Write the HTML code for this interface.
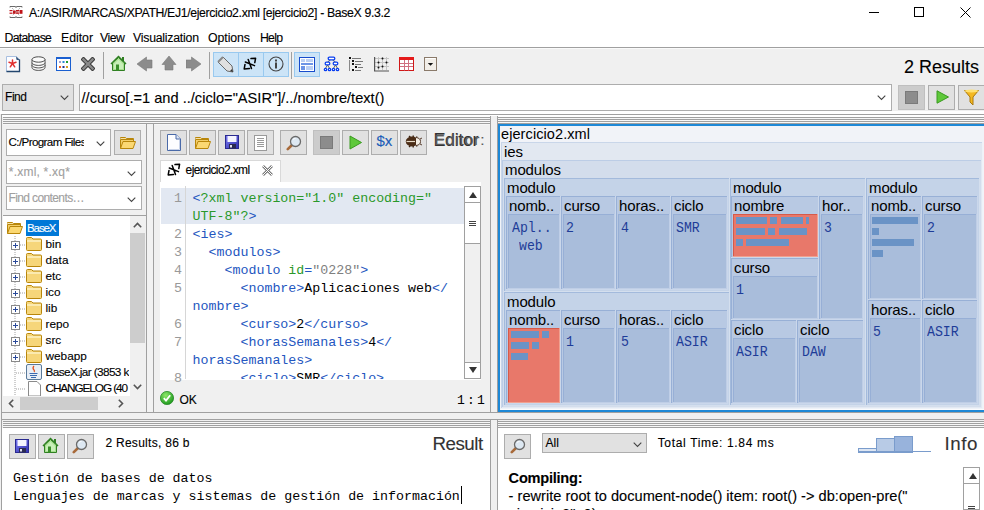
<!DOCTYPE html><html><head><meta charset="utf-8"><style>html,body{margin:0;padding:0;}body{width:984px;height:510px;overflow:hidden;position:relative;background:#f0f0f0;}.a{position:absolute;box-sizing:border-box;}.t{position:absolute;white-space:pre;}.s{-webkit-text-stroke:0.12px currentColor;}</style></head><body><div class="a" style="left:0px;top:0px;width:984px;height:48px;background:#ffffff;"></div>
<div class="a" style="left:0px;top:47px;width:984px;height:1px;background:#a0a0a0;"></div>
<svg class="a" style="left:9px;top:6px" width="14" height="12" viewBox="0 0 14 12"><path d="M1 1.5V0.5H6.5V1.5M7.5 1.5V0.5H13V1.5M1 10.5V11.5H6.5V10.5M7.5 10.5V11.5H13V10.5" fill="none" stroke="#6a6a6a"/><path d="M3 2L11 10M11 2L3 10" stroke="#9a9a9a" stroke-dasharray="1 1.2"/><g fill="#c0141a"><rect x="0.5" y="4" width="3" height="1.2"/><rect x="0.5" y="6.6" width="3" height="1.2"/><rect x="4" y="4.5" width="2.6" height="3.3"/><rect x="7" y="4" width="3" height="1.2"/><rect x="7.5" y="5.5" width="2" height="1"/><rect x="7" y="6.6" width="3" height="1.2"/><rect x="10.5" y="4" width="3" height="3.8"/></g></svg>
<div class="t s" style="left:29px;top:7px;font-size:12.3px;line-height:12.3px;font-family:'Liberation Sans', sans-serif;color:#000;letter-spacing:-0.364px;">A:/ASIR/MARCAS/XPATH/EJ1/ejercicio2.xml [ejercicio2] - BaseX 9.3.2</div>
<div class="a" style="left:869px;top:12px;width:10px;height:1px;background:#000;"></div>
<div class="a" style="left:914px;top:7px;width:10px;height:10px;box-shadow:inset 0 0 0 1px #000;"></div>
<svg class="a" style="left:960px;top:7px" width="11" height="11" viewBox="0 0 11 11"><path d="M0.5 0.5L10.5 10.5M10.5 0.5L0.5 10.5" stroke="#000" stroke-width="1"/></svg>
<div class="t s" style="left:4.5px;top:32px;font-size:12.3px;line-height:12.3px;font-family:'Liberation Sans', sans-serif;color:#000;letter-spacing:-0.750px;">Database</div>
<div class="t s" style="left:61px;top:32px;font-size:12.3px;line-height:12.3px;font-family:'Liberation Sans', sans-serif;color:#000;letter-spacing:-0.026px;">Editor</div>
<div class="t s" style="left:100px;top:32px;font-size:12.3px;line-height:12.3px;font-family:'Liberation Sans', sans-serif;color:#000;letter-spacing:-0.479px;">View</div>
<div class="t s" style="left:133px;top:32px;font-size:12.3px;line-height:12.3px;font-family:'Liberation Sans', sans-serif;color:#000;letter-spacing:-0.236px;">Visualization</div>
<div class="t s" style="left:208px;top:32px;font-size:12.3px;line-height:12.3px;font-family:'Liberation Sans', sans-serif;color:#000;letter-spacing:-0.064px;">Options</div>
<div class="t s" style="left:260px;top:32px;font-size:12.3px;line-height:12.3px;font-family:'Liberation Sans', sans-serif;color:#000;letter-spacing:-0.765px;">Help</div>
<div class="a" style="left:0px;top:48px;width:984px;height:1px;background:#fafafa;"></div>
<svg class="a" style="left:6px;top:56px" width="15" height="17" viewBox="0 0 15 17"><path d="M0.5 0.5H10.5L13.5 3.5V15.5H0.5Z" fill="#fdfdff" stroke="#a8bfe0"/><path d="M13.5 3.5V15.5H0.5" fill="none" stroke="#23466e" stroke-width="1.3"/><path d="M10 0.5L13.8 4.2L10.5 3.8Z" fill="#23466e"/><path d="M6.5 7.5V4M6.5 7.5L3 6.2M6.5 7.5L10 6.2M6.5 7.5L4.3 10.8M6.5 7.5L8.7 10.8" stroke="#e03030" stroke-width="1.5" stroke-linecap="round"/></svg>
<svg class="a" style="left:31px;top:56px" width="15" height="16" viewBox="0 0 15 16"><g fill="#fafafa" stroke="#3c3c3c" stroke-width="0.9"><path d="M1 11.5c0 1.6 2.9 2.9 6.5 2.9s6.5-1.3 6.5-2.9V9H1Z"/><path d="M1 9c0 1.6 2.9 2.9 6.5 2.9S14 10.6 14 9V6.5H1Z"/><path d="M1 6.5c0 1.6 2.9 2.9 6.5 2.9S14 8.1 14 6.5V3.5H1Z"/><ellipse cx="7.5" cy="3.5" rx="6.5" ry="2.7"/></g></svg>
<svg class="a" style="left:56px;top:57px" width="15" height="14" viewBox="0 0 15 14"><rect x="0.5" y="0.5" width="14" height="13" fill="#fff" stroke="#1a5fd0"/><rect x="0" y="0" width="15" height="2" fill="#1a5fd0"/><rect x="3" y="4" width="2" height="2" fill="#a0a0d0"/><rect x="6.5" y="4" width="2" height="2" fill="#2a8ad8"/><rect x="10" y="4" width="2" height="2" fill="#20a030"/><rect x="3" y="9" width="2" height="2" fill="#f06020"/><rect x="6.5" y="9" width="2" height="2" fill="#1a3090"/><rect x="10" y="9" width="2" height="2" fill="#d8a020"/></svg>
<svg class="a" style="left:81px;top:57px" width="14" height="14" viewBox="0 0 14 14"><path d="M2.5 2.5L11.5 11.5M11.5 2.5L2.5 11.5" stroke="#3a3a3a" stroke-width="4.4" stroke-linecap="square"/><path d="M2.5 2.5L11.5 11.5M11.5 2.5L2.5 11.5" stroke="#8a8a8a" stroke-width="2.4" stroke-linecap="square"/></svg>
<div class="a" style="left:103px;top:52px;width:1px;height:27px;background:#a0a0a0;"></div>
<svg class="a" style="left:110px;top:55px" width="17" height="17" viewBox="0 0 17 17"><path d="M1 9L8.5 1.5L16 9" fill="none" stroke="#2f7f22" stroke-width="1.5"/><path d="M2.5 8V15.5H14.5V8L8.5 2.5Z" fill="#a6de8e" stroke="#2f7f22"/><path d="M4 9L8.5 4.5L13 9V14H4Z" fill="#c8efb8"/><rect x="6" y="9.5" width="3" height="6" fill="#3a8f2a"/><rect x="12" y="2" width="2" height="4" fill="#2f7f22"/></svg>
<svg class="a" style="left:137px;top:56px" width="16" height="16" viewBox="0 0 16 16"><path d="M0 8L9.5 1V4H15V12H9.5V15Z" fill="#8c8c8c" stroke="#7a7a7a" stroke-width="0.6"/></svg>
<svg class="a" style="left:161px;top:55px" width="16" height="16" viewBox="0 0 16 16"><path d="M8 1L15 9.5H12V15H4V9.5H1Z" fill="#8c8c8c" stroke="#7a7a7a" stroke-width="0.6"/></svg>
<svg class="a" style="left:186px;top:56px" width="16" height="16" viewBox="0 0 16 16"><path d="M15 8L5.5 1V4H0V12H5.5V15Z" fill="#8c8c8c" stroke="#7a7a7a" stroke-width="0.6"/></svg>
<div class="a" style="left:209px;top:52px;width:1px;height:27px;background:#a0a0a0;"></div>
<div class="a" style="left:213px;top:52px;width:26px;height:25px;background:#cce4f7;box-shadow:inset 0 0 0 1px #99c9ef;"></div>
<div class="a" style="left:238px;top:52px;width:26px;height:25px;background:#cce4f7;box-shadow:inset 0 0 0 1px #99c9ef;"></div>
<div class="a" style="left:263px;top:52px;width:26px;height:25px;background:#cce4f7;box-shadow:inset 0 0 0 1px #99c9ef;"></div>
<svg class="a" style="left:217px;top:56px" width="17" height="17" viewBox="0 0 17 17"><path d="M3 4L6 1L15 10L16 16L10 15L1 6Z" fill="#e0e0e0" stroke="#6a6a6a"/><path d="M6 1L1 6" stroke="#888" stroke-width="2"/><path d="M16 16L13 15L15 13Z" fill="#333"/></svg>
<svg class="a" style="left:240px;top:55px" width="20" height="18" viewBox="0 0 20 18"><g fill="none" stroke="#000" stroke-width="1.5" stroke-linecap="round" stroke-linejoin="round"><path d="M11 3.6L15.6 3.2L14.8 7.6M5 9.4L4.2 14L9.5 13.4M5.3 7L14.5 10.6M8.2 4.5L11.5 13.5"/></g></svg>
<svg class="a" style="left:268px;top:56px" width="16" height="16" viewBox="0 0 16 16"><circle cx="8" cy="8" r="7" fill="none" stroke="#444" stroke-width="1.1"/><rect x="7" y="6.5" width="2" height="6" fill="#444"/><rect x="7" y="3.5" width="2" height="2" fill="#444"/></svg>
<div class="a" style="left:291px;top:52px;width:1px;height:27px;background:#a0a0a0;"></div>
<div class="a" style="left:294px;top:52px;width:26px;height:25px;background:#cce4f7;box-shadow:inset 0 0 0 1px #99c9ef;"></div>
<svg class="a" style="left:299px;top:57px" width="16" height="15" viewBox="0 0 16 15"><rect x="0.5" y="0.5" width="15" height="14" fill="#fff" stroke="#1040c0"/><rect x="0" y="0" width="16" height="15" fill="none" stroke="#1a4fd0" stroke-width="1.5"/><rect x="2" y="2" width="4" height="3" fill="#bcd0f4"/><rect x="7" y="2" width="7" height="3" fill="#bcd0f4"/><rect x="2" y="6" width="12" height="2" fill="#6e95e6"/><rect x="2" y="9" width="4" height="4" fill="#6e95e6"/><rect x="7" y="9" width="7" height="4" fill="#bcd0f4"/></svg>
<svg class="a" style="left:323px;top:56px" width="17" height="16" viewBox="0 0 17 16"><path d="M7.5 4L4.5 6M9.5 4L12.5 6M4.5 9L2.5 12.3M4.5 9L6.5 12.3M12.5 9L10.5 12.3M12.5 9L14.5 12.3" stroke="#6a6a50" stroke-width="1"/><g fill="#fff" stroke="#0a3ff0" stroke-width="1.3"><rect x="5.2" y="1.2" width="6.6" height="2.6" rx="1.2"/><rect x="2.2" y="6.2" width="4.6" height="2.6" rx="1.2"/><rect x="10.2" y="6.2" width="4.6" height="2.6" rx="1.2"/><circle cx="2.5" cy="13.5" r="1.2"/><circle cx="6.5" cy="13.5" r="1.2"/><circle cx="10.5" cy="13.5" r="1.2"/><circle cx="14.5" cy="13.5" r="1.2"/></g></svg>
<svg class="a" style="left:348px;top:56px" width="16" height="16" viewBox="0 0 16 16"><g fill="#111"><rect x="1" y="1" width="2" height="2"/><rect x="4" y="4" width="2" height="2"/><rect x="4" y="7" width="2" height="2"/><rect x="7" y="10" width="2" height="2"/><rect x="4" y="13" width="2" height="2"/></g><path d="M4 2.5H13M7 5.5H15M7 8.5H13M10 11.5H15M7 14.5H13" stroke="#777"/><path d="M1.5 4V15" stroke="#888"/></svg>
<svg class="a" style="left:374px;top:56px" width="16" height="16" viewBox="0 0 16 16"><path d="M4.5 1V14M8.5 1V14M12.5 1V14M1 2.5H15M1 6.5H15M1 10.5H15" stroke="#c4c4c4"/><path d="M0.6 1V15H15" fill="none" stroke="#555" stroke-width="1.2"/><g fill="#111"><circle cx="8.5" cy="2.5" r="1"/><circle cx="4.5" cy="6.5" r="1"/><circle cx="12.5" cy="6.5" r="1"/><circle cx="8.5" cy="10.5" r="1"/><circle cx="4.5" cy="11.5" r="1"/></g></svg>
<svg class="a" style="left:399px;top:57px" width="15" height="14" viewBox="0 0 15 14"><rect x="0.5" y="0.5" width="14" height="13" fill="#fff" stroke="#d01818"/><rect x="0" y="0" width="15" height="3" fill="#e41a1a"/><path d="M5.5 3V13.5M9.5 3V13.5M1 6.5H14M1 9.5H14" stroke="#cf7080"/></svg>
<svg class="a" style="left:424px;top:57px" width="13" height="14" viewBox="0 0 13 14"><rect x="0.5" y="0.5" width="12" height="13" fill="#f2eee8" stroke="#8a7a6a"/><path d="M1.5 1.5H11.5" stroke="#fff"/><path d="M3.8 6H9.2L6.5 8.8Z" fill="#111"/></svg>
<div class="t s" style="left:904px;top:58px;font-size:18px;line-height:18px;font-family:'Liberation Sans', sans-serif;color:#000;letter-spacing:-0.004px;">2 Results</div>
<div class="a" style="left:2px;top:84px;width:72px;height:27px;background:#e1e1e1;box-shadow:inset 0 0 0 1px #adadad;"></div>
<div class="t s" style="left:5px;top:91px;font-size:12px;line-height:12px;font-family:'Liberation Sans', sans-serif;color:#000;letter-spacing:-0.447px;">Find</div>
<svg class="a" style="left:60px;top:95px" width="9" height="6" viewBox="0 0 9 6"><path d="M0.7 0.7L4.5 4.5L8.3 0.7" fill="none" stroke="#444" stroke-width="1.1"/></svg>
<div class="a" style="left:79px;top:84px;width:813px;height:27px;background:#ffffff;box-shadow:inset 0 0 0 1px #adadad;"></div>
<div class="t s" style="left:81.5px;top:91px;font-size:14.6px;line-height:14.6px;font-family:'Liberation Sans', sans-serif;color:#000;letter-spacing:0.011px;">//curso[.=1 and ../ciclo="ASIR"]/../nombre/text()</div>
<svg class="a" style="left:877px;top:95px" width="9" height="6" viewBox="0 0 9 6"><path d="M0.7 0.7L4.5 4.5L8.3 0.7" fill="none" stroke="#444" stroke-width="1.1"/></svg>
<div class="a" style="left:898px;top:85px;width:27px;height:25px;background:#cccccc;box-shadow:inset 0 0 0 1px #bfbfbf;"></div>
<div class="a" style="left:905px;top:91px;width:13px;height:13px;background:#8c8c8c;box-shadow:inset 0 0 0 1px #7a7a7a;"></div>
<div class="a" style="left:928px;top:85px;width:27px;height:25px;background:#e1e1e1;box-shadow:inset 0 0 0 1px #adadad;"></div>
<svg class="a" style="left:936px;top:90px" width="13" height="14" viewBox="0 0 13 14"><path d="M1 0.8L12.5 7L1 13.2Z" fill="#5ec83a" stroke="#3a9a20"/></svg>
<div class="a" style="left:958px;top:85px;width:30px;height:25px;background:#e1e1e1;box-shadow:inset 0 0 0 1px #adadad;"></div>
<svg class="a" style="left:964px;top:89px" width="15" height="17" viewBox="0 0 15 17"><path d="M0.5 1.5H14.5L9 8V16L6 13V8Z" fill="#f4b820" stroke="#a87810"/><ellipse cx="7.5" cy="2" rx="7" ry="1.5" fill="#ffe070"/></svg>
<div class="a" style="left:0px;top:111px;width:984px;height:3px;background:#ffffff;"></div>
<div class="a" style="left:1px;top:114px;width:983px;height:1px;background:#a0a0a0;"></div>
<div class="a" style="left:1px;top:115px;width:983px;height:2px;background:#ffffff;"></div>
<div class="a" style="left:1px;top:114px;width:1px;height:396px;background:#a0a0a0;"></div>
<div class="a" style="left:3px;top:117px;width:488px;height:1px;background:#a0a0a0;"></div>
<div class="a" style="left:3px;top:119px;width:488px;height:1px;background:#a0a0a0;"></div>
<div class="a" style="left:3px;top:121px;width:488px;height:1px;background:#a0a0a0;"></div>
<div class="a" style="left:3px;top:123px;width:488px;height:1px;background:#a0a0a0;"></div>
<div class="a" style="left:3px;top:118px;width:488px;height:1px;background:#f7f7f7;"></div>
<div class="a" style="left:3px;top:120px;width:488px;height:1px;background:#f7f7f7;"></div>
<div class="a" style="left:3px;top:122px;width:488px;height:1px;background:#f7f7f7;"></div>
<div class="a" style="left:3px;top:124px;width:488px;height:1px;background:#f7f7f7;"></div>
<div class="a" style="left:497px;top:117px;width:487px;height:1px;background:#a0a0a0;"></div>
<div class="a" style="left:497px;top:119px;width:487px;height:1px;background:#a0a0a0;"></div>
<div class="a" style="left:497px;top:121px;width:487px;height:1px;background:#a0a0a0;"></div>
<div class="a" style="left:497px;top:123px;width:487px;height:1px;background:#a0a0a0;"></div>
<div class="a" style="left:497px;top:118px;width:487px;height:1px;background:#f7f7f7;"></div>
<div class="a" style="left:497px;top:120px;width:487px;height:1px;background:#f7f7f7;"></div>
<div class="a" style="left:497px;top:122px;width:487px;height:1px;background:#f7f7f7;"></div>
<div class="a" style="left:497px;top:124px;width:487px;height:1px;background:#f7f7f7;"></div>
<div class="a" style="left:491px;top:116px;width:6px;height:8px;background:#f0f0f0;"></div>
<div class="a" style="left:146px;top:124px;width:1px;height:289px;background:#a0a0a0;"></div>
<div class="a" style="left:153px;top:124px;width:1px;height:289px;background:#a0a0a0;"></div>
<div class="a" style="left:147px;top:124px;width:6px;height:288px;background:#f2f2f2;"></div>
<div class="a" style="left:490px;top:116px;width:1px;height:297px;background:#a0a0a0;"></div>
<div class="a" style="left:497px;top:116px;width:1px;height:297px;background:#a0a0a0;"></div>
<div class="a" style="left:1px;top:412px;width:983px;height:1px;background:#a0a0a0;"></div>
<div class="a" style="left:1px;top:419px;width:983px;height:1px;background:#a0a0a0;"></div>
<div class="a" style="left:3px;top:421px;width:488px;height:1px;background:#a0a0a0;"></div>
<div class="a" style="left:3px;top:423px;width:488px;height:1px;background:#a0a0a0;"></div>
<div class="a" style="left:3px;top:425px;width:488px;height:1px;background:#a0a0a0;"></div>
<div class="a" style="left:3px;top:427px;width:488px;height:1px;background:#a0a0a0;"></div>
<div class="a" style="left:3px;top:422px;width:488px;height:1px;background:#f7f7f7;"></div>
<div class="a" style="left:3px;top:424px;width:488px;height:1px;background:#f7f7f7;"></div>
<div class="a" style="left:3px;top:426px;width:488px;height:1px;background:#f7f7f7;"></div>
<div class="a" style="left:3px;top:428px;width:488px;height:1px;background:#f7f7f7;"></div>
<div class="a" style="left:498px;top:421px;width:486px;height:1px;background:#a0a0a0;"></div>
<div class="a" style="left:498px;top:423px;width:486px;height:1px;background:#a0a0a0;"></div>
<div class="a" style="left:498px;top:425px;width:486px;height:1px;background:#a0a0a0;"></div>
<div class="a" style="left:498px;top:427px;width:486px;height:1px;background:#a0a0a0;"></div>
<div class="a" style="left:498px;top:422px;width:486px;height:1px;background:#f7f7f7;"></div>
<div class="a" style="left:498px;top:424px;width:486px;height:1px;background:#f7f7f7;"></div>
<div class="a" style="left:498px;top:426px;width:486px;height:1px;background:#f7f7f7;"></div>
<div class="a" style="left:498px;top:428px;width:486px;height:1px;background:#f7f7f7;"></div>
<div class="a" style="left:490px;top:420px;width:1px;height:90px;background:#a0a0a0;"></div>
<div class="a" style="left:497px;top:420px;width:1px;height:90px;background:#a0a0a0;"></div>
<div class="a" style="left:491px;top:420px;width:6px;height:90px;background:#f0f0f0;"></div>
<div class="a" style="left:2px;top:428px;width:488px;height:82px;background:#ffffff;"></div>
<div class="a" style="left:498px;top:428px;width:486px;height:82px;background:#ffffff;"></div>
<div class="a" style="left:6px;top:129px;width:105px;height:27px;background:#ffffff;box-shadow:inset 0 0 0 1px #adadad;"></div>
<div class="a" style="left:0;top:0;width:84px;height:160px;overflow:hidden">
<div class="t s" style="left:8.5px;top:136px;font-size:11.6px;line-height:11.6px;font-family:'Liberation Sans', sans-serif;color:#000;letter-spacing:-0.601px;">C:/Program Files</div>
</div>
<svg class="a" style="left:96px;top:141px" width="9" height="6" viewBox="0 0 9 6"><path d="M0.7 0.7L4.5 4.5L8.3 0.7" fill="none" stroke="#444" stroke-width="1.1"/></svg>
<div class="a" style="left:114px;top:130px;width:27px;height:25px;background:#e1e1e1;box-shadow:inset 0 0 0 1px #adadad;"></div>
<svg class="a" style="left:120px;top:136px" width="16" height="13" viewBox="0 0 16 13"><path d="M0.5 2.5V1.5H5.5L6.5 2.5H13.5V5.5" fill="#f8e0a0" stroke="#b8860b"/><path d="M0.5 12.5V3.5H13.5V5.5" fill="#f3cf6a" stroke="#b8860b"/><path d="M0.5 12.5L3 5.5H15.5L13 12.5Z" fill="#fbd872" stroke="#b8860b"/></svg>
<div class="a" style="left:6px;top:160px;width:136px;height:24px;background:#ffffff;box-shadow:inset 0 0 0 1px #adadad;"></div>
<div class="t s" style="left:8.8px;top:166px;font-size:12px;line-height:12px;font-family:'Liberation Sans', sans-serif;color:#a0a0a0;letter-spacing:0.211px;">*.xml, *.xq*</div>
<svg class="a" style="left:127px;top:171px" width="9" height="6" viewBox="0 0 9 6"><path d="M0.7 0.7L4.5 4.5L8.3 0.7" fill="none" stroke="#444" stroke-width="1.1"/></svg>
<div class="a" style="left:6px;top:186px;width:136px;height:24px;background:#ffffff;box-shadow:inset 0 0 0 1px #adadad;"></div>
<div class="t s" style="left:8.5px;top:192px;font-size:12px;line-height:12px;font-family:'Liberation Sans', sans-serif;color:#a0a0a0;letter-spacing:-0.618px;">Find contents…</div>
<svg class="a" style="left:127px;top:197px" width="9" height="6" viewBox="0 0 9 6"><path d="M0.7 0.7L4.5 4.5L8.3 0.7" fill="none" stroke="#444" stroke-width="1.1"/></svg>
<div class="a" style="left:3px;top:215px;width:143px;height:1px;background:#a0a0a0;"></div>
<div class="a" style="left:3px;top:216px;width:127px;height:180px;background:#ffffff;"></div>
<div class="a" style="left:130px;top:216px;width:16px;height:180px;background:#f0f0f0;"></div>
<div class="a" style="left:130px;top:233px;width:15px;height:110px;background:#cdcdcd;"></div>
<svg class="a" style="left:133px;top:222px" width="9" height="6" viewBox="0 0 9 6"><path d="M0.8 5.2L4.5 1.5L8.2 5.2" fill="none" stroke="#555" stroke-width="1.6"/></svg>
<svg class="a" style="left:133px;top:384px" width="9" height="6" viewBox="0 0 9 6"><path d="M0.8 0.8L4.5 4.5L8.2 0.8" fill="none" stroke="#555" stroke-width="1.6"/></svg>
<div class="a" style="left:3px;top:396px;width:143px;height:16px;background:#f0f0f0;"></div>
<div class="a" style="left:20px;top:397px;width:78px;height:13px;background:#cdcdcd;"></div>
<svg class="a" style="left:8px;top:399px" width="6" height="9" viewBox="0 0 6 9"><path d="M5.2 0.8L1.5 4.5L5.2 8.2" fill="none" stroke="#555" stroke-width="1.6"/></svg>
<svg class="a" style="left:118px;top:399px" width="6" height="9" viewBox="0 0 6 9"><path d="M0.8 0.8L4.5 4.5L0.8 8.2" fill="none" stroke="#555" stroke-width="1.6"/></svg>
<div class="a" style="left:26px;top:220px;width:33px;height:16px;background:#0078d7;"></div>
<svg class="a" style="left:7px;top:221px" width="16" height="13" viewBox="0 0 16 13"><path d="M0.5 2.5V1.5H5.5L6.5 2.5H13.5V5.5" fill="#f8e0a0" stroke="#b8860b"/><path d="M0.5 12.5V3.5H13.5V5.5" fill="#f3cf6a" stroke="#b8860b"/><path d="M0.5 12.5L3 5.5H15.5L13 12.5Z" fill="#fbd872" stroke="#b8860b"/></svg>
<div class="t s" style="left:27px;top:223px;font-size:11.5px;line-height:11.5px;font-family:'Liberation Sans', sans-serif;color:#fff;letter-spacing:-1.095px;">BaseX</div>
<svg class="a" style="left:14px;top:236px" width="2" height="160" viewBox="0 0 2 160"><path d="M1 0V160" stroke="#a0a0a0" stroke-dasharray="1 1"/></svg>
<div class="a" style="left:11px;top:241px;width:9px;height:9px;background:#ffffff;box-shadow:inset 0 0 0 1px #8a8a8a;"></div>
<div class="a" style="left:13px;top:245px;width:5px;height:1px;background:#2a4a9a;"></div>
<div class="a" style="left:15px;top:243px;width:1px;height:5px;background:#2a4a9a;"></div>
<svg class="a" style="left:20px;top:244px" width="6" height="2" viewBox="0 0 6 2"><path d="M0 1H6" stroke="#a0a0a0" stroke-dasharray="1 1"/></svg>
<svg class="a" style="left:26px;top:237px" width="16" height="14" viewBox="0 0 16 14"><path d="M0.5 2.5V1.5Q0.5 0.5 1.5 0.5H5.5L7 2H14.5Q15.5 2 15.5 3V12.5Q15.5 13.5 14.5 13.5H1.5Q0.5 13.5 0.5 12.5Z" fill="#f6d67a" stroke="#b8860b"/><path d="M1 4H15" stroke="#fbeab0" stroke-width="2"/></svg>
<div class="t s" style="left:45.5px;top:239px;font-size:11.8px;line-height:11.8px;font-family:'Liberation Sans', sans-serif;color:#000;">bin</div>
<div class="a" style="left:11px;top:257px;width:9px;height:9px;background:#ffffff;box-shadow:inset 0 0 0 1px #8a8a8a;"></div>
<div class="a" style="left:13px;top:261px;width:5px;height:1px;background:#2a4a9a;"></div>
<div class="a" style="left:15px;top:259px;width:1px;height:5px;background:#2a4a9a;"></div>
<svg class="a" style="left:20px;top:260px" width="6" height="2" viewBox="0 0 6 2"><path d="M0 1H6" stroke="#a0a0a0" stroke-dasharray="1 1"/></svg>
<svg class="a" style="left:26px;top:253px" width="16" height="14" viewBox="0 0 16 14"><path d="M0.5 2.5V1.5Q0.5 0.5 1.5 0.5H5.5L7 2H14.5Q15.5 2 15.5 3V12.5Q15.5 13.5 14.5 13.5H1.5Q0.5 13.5 0.5 12.5Z" fill="#f6d67a" stroke="#b8860b"/><path d="M1 4H15" stroke="#fbeab0" stroke-width="2"/></svg>
<div class="t s" style="left:45.5px;top:255px;font-size:11.8px;line-height:11.8px;font-family:'Liberation Sans', sans-serif;color:#000;">data</div>
<div class="a" style="left:11px;top:273px;width:9px;height:9px;background:#ffffff;box-shadow:inset 0 0 0 1px #8a8a8a;"></div>
<div class="a" style="left:13px;top:277px;width:5px;height:1px;background:#2a4a9a;"></div>
<div class="a" style="left:15px;top:275px;width:1px;height:5px;background:#2a4a9a;"></div>
<svg class="a" style="left:20px;top:276px" width="6" height="2" viewBox="0 0 6 2"><path d="M0 1H6" stroke="#a0a0a0" stroke-dasharray="1 1"/></svg>
<svg class="a" style="left:26px;top:269px" width="16" height="14" viewBox="0 0 16 14"><path d="M0.5 2.5V1.5Q0.5 0.5 1.5 0.5H5.5L7 2H14.5Q15.5 2 15.5 3V12.5Q15.5 13.5 14.5 13.5H1.5Q0.5 13.5 0.5 12.5Z" fill="#f6d67a" stroke="#b8860b"/><path d="M1 4H15" stroke="#fbeab0" stroke-width="2"/></svg>
<div class="t s" style="left:45.5px;top:271px;font-size:11.8px;line-height:11.8px;font-family:'Liberation Sans', sans-serif;color:#000;">etc</div>
<div class="a" style="left:11px;top:289px;width:9px;height:9px;background:#ffffff;box-shadow:inset 0 0 0 1px #8a8a8a;"></div>
<div class="a" style="left:13px;top:293px;width:5px;height:1px;background:#2a4a9a;"></div>
<div class="a" style="left:15px;top:291px;width:1px;height:5px;background:#2a4a9a;"></div>
<svg class="a" style="left:20px;top:292px" width="6" height="2" viewBox="0 0 6 2"><path d="M0 1H6" stroke="#a0a0a0" stroke-dasharray="1 1"/></svg>
<svg class="a" style="left:26px;top:285px" width="16" height="14" viewBox="0 0 16 14"><path d="M0.5 2.5V1.5Q0.5 0.5 1.5 0.5H5.5L7 2H14.5Q15.5 2 15.5 3V12.5Q15.5 13.5 14.5 13.5H1.5Q0.5 13.5 0.5 12.5Z" fill="#f6d67a" stroke="#b8860b"/><path d="M1 4H15" stroke="#fbeab0" stroke-width="2"/></svg>
<div class="t s" style="left:45.5px;top:287px;font-size:11.8px;line-height:11.8px;font-family:'Liberation Sans', sans-serif;color:#000;">ico</div>
<div class="a" style="left:11px;top:305px;width:9px;height:9px;background:#ffffff;box-shadow:inset 0 0 0 1px #8a8a8a;"></div>
<div class="a" style="left:13px;top:309px;width:5px;height:1px;background:#2a4a9a;"></div>
<div class="a" style="left:15px;top:307px;width:1px;height:5px;background:#2a4a9a;"></div>
<svg class="a" style="left:20px;top:308px" width="6" height="2" viewBox="0 0 6 2"><path d="M0 1H6" stroke="#a0a0a0" stroke-dasharray="1 1"/></svg>
<svg class="a" style="left:26px;top:301px" width="16" height="14" viewBox="0 0 16 14"><path d="M0.5 2.5V1.5Q0.5 0.5 1.5 0.5H5.5L7 2H14.5Q15.5 2 15.5 3V12.5Q15.5 13.5 14.5 13.5H1.5Q0.5 13.5 0.5 12.5Z" fill="#f6d67a" stroke="#b8860b"/><path d="M1 4H15" stroke="#fbeab0" stroke-width="2"/></svg>
<div class="t s" style="left:45.5px;top:303px;font-size:11.8px;line-height:11.8px;font-family:'Liberation Sans', sans-serif;color:#000;">lib</div>
<div class="a" style="left:11px;top:321px;width:9px;height:9px;background:#ffffff;box-shadow:inset 0 0 0 1px #8a8a8a;"></div>
<div class="a" style="left:13px;top:325px;width:5px;height:1px;background:#2a4a9a;"></div>
<div class="a" style="left:15px;top:323px;width:1px;height:5px;background:#2a4a9a;"></div>
<svg class="a" style="left:20px;top:324px" width="6" height="2" viewBox="0 0 6 2"><path d="M0 1H6" stroke="#a0a0a0" stroke-dasharray="1 1"/></svg>
<svg class="a" style="left:26px;top:317px" width="16" height="14" viewBox="0 0 16 14"><path d="M0.5 2.5V1.5Q0.5 0.5 1.5 0.5H5.5L7 2H14.5Q15.5 2 15.5 3V12.5Q15.5 13.5 14.5 13.5H1.5Q0.5 13.5 0.5 12.5Z" fill="#f6d67a" stroke="#b8860b"/><path d="M1 4H15" stroke="#fbeab0" stroke-width="2"/></svg>
<div class="t s" style="left:45.5px;top:319px;font-size:11.8px;line-height:11.8px;font-family:'Liberation Sans', sans-serif;color:#000;">repo</div>
<div class="a" style="left:11px;top:337px;width:9px;height:9px;background:#ffffff;box-shadow:inset 0 0 0 1px #8a8a8a;"></div>
<div class="a" style="left:13px;top:341px;width:5px;height:1px;background:#2a4a9a;"></div>
<div class="a" style="left:15px;top:339px;width:1px;height:5px;background:#2a4a9a;"></div>
<svg class="a" style="left:20px;top:340px" width="6" height="2" viewBox="0 0 6 2"><path d="M0 1H6" stroke="#a0a0a0" stroke-dasharray="1 1"/></svg>
<svg class="a" style="left:26px;top:333px" width="16" height="14" viewBox="0 0 16 14"><path d="M0.5 2.5V1.5Q0.5 0.5 1.5 0.5H5.5L7 2H14.5Q15.5 2 15.5 3V12.5Q15.5 13.5 14.5 13.5H1.5Q0.5 13.5 0.5 12.5Z" fill="#f6d67a" stroke="#b8860b"/><path d="M1 4H15" stroke="#fbeab0" stroke-width="2"/></svg>
<div class="t s" style="left:45.5px;top:335px;font-size:11.8px;line-height:11.8px;font-family:'Liberation Sans', sans-serif;color:#000;">src</div>
<div class="a" style="left:11px;top:353px;width:9px;height:9px;background:#ffffff;box-shadow:inset 0 0 0 1px #8a8a8a;"></div>
<div class="a" style="left:13px;top:357px;width:5px;height:1px;background:#2a4a9a;"></div>
<div class="a" style="left:15px;top:355px;width:1px;height:5px;background:#2a4a9a;"></div>
<svg class="a" style="left:20px;top:356px" width="6" height="2" viewBox="0 0 6 2"><path d="M0 1H6" stroke="#a0a0a0" stroke-dasharray="1 1"/></svg>
<svg class="a" style="left:26px;top:349px" width="16" height="14" viewBox="0 0 16 14"><path d="M0.5 2.5V1.5Q0.5 0.5 1.5 0.5H5.5L7 2H14.5Q15.5 2 15.5 3V12.5Q15.5 13.5 14.5 13.5H1.5Q0.5 13.5 0.5 12.5Z" fill="#f6d67a" stroke="#b8860b"/><path d="M1 4H15" stroke="#fbeab0" stroke-width="2"/></svg>
<div class="t s" style="left:45.5px;top:351px;font-size:11.8px;line-height:11.8px;font-family:'Liberation Sans', sans-serif;color:#000;">webapp</div>
<svg class="a" style="left:16px;top:372px" width="10" height="2" viewBox="0 0 10 2"><path d="M0 1H10" stroke="#a0a0a0" stroke-dasharray="1 1"/></svg>
<svg class="a" style="left:16px;top:388px" width="10" height="2" viewBox="0 0 10 2"><path d="M0 1H10" stroke="#a0a0a0" stroke-dasharray="1 1"/></svg>
<svg class="a" style="left:26px;top:364px" width="16" height="16" viewBox="0 0 16 16"><rect x="0.5" y="0.5" width="15" height="15" rx="1.5" fill="#e8eef6" stroke="#5a7a9a"/><path d="M8 2Q6 4 8 6Q9 7 8 8" fill="none" stroke="#e05020" stroke-width="1.2"/><path d="M3.5 9.5H11.5M4 11.5H11M5 13.5H10" stroke="#3a6ab0"/></svg>
<svg class="a" style="left:28px;top:381px" width="13" height="15" viewBox="0 0 13 15"><path d="M0.5 0.5H9L12.5 4V15H0.5Z" fill="#fff" stroke="#8a8a8a"/></svg>
<div class="a" style="left:0;top:0;width:129px;height:396px;overflow:hidden">
<div class="t s" style="left:45.5px;top:367px;font-size:11.8px;line-height:11.8px;font-family:'Liberation Sans', sans-serif;color:#000;letter-spacing:-0.62px;">BaseX.jar (3853 kB)</div>
<div class="t s" style="left:45.5px;top:383px;font-size:11.8px;line-height:11.8px;font-family:'Liberation Sans', sans-serif;color:#000;letter-spacing:-1.1px;">CHANGELOG (40 kB)</div>
</div>
<div class="a" style="left:160px;top:130px;width:27px;height:25px;background:#e1e1e1;box-shadow:inset 0 0 0 1px #adadad;"></div>
<div class="a" style="left:189px;top:130px;width:27px;height:25px;background:#e1e1e1;box-shadow:inset 0 0 0 1px #adadad;"></div>
<div class="a" style="left:218px;top:130px;width:27px;height:25px;background:#e1e1e1;box-shadow:inset 0 0 0 1px #adadad;"></div>
<div class="a" style="left:247px;top:130px;width:27px;height:25px;background:#e1e1e1;box-shadow:inset 0 0 0 1px #adadad;"></div>
<div class="a" style="left:280px;top:130px;width:27px;height:25px;background:#e1e1e1;box-shadow:inset 0 0 0 1px #adadad;"></div>
<div class="a" style="left:342px;top:130px;width:27px;height:25px;background:#e1e1e1;box-shadow:inset 0 0 0 1px #adadad;"></div>
<div class="a" style="left:371px;top:130px;width:27px;height:25px;background:#e1e1e1;box-shadow:inset 0 0 0 1px #adadad;"></div>
<div class="a" style="left:400px;top:130px;width:27px;height:25px;background:#e1e1e1;box-shadow:inset 0 0 0 1px #adadad;"></div>
<div class="a" style="left:313px;top:130px;width:27px;height:25px;background:#cccccc;box-shadow:inset 0 0 0 1px #bfbfbf;"></div>
<svg class="a" style="left:167px;top:134px" width="14" height="17" viewBox="0 0 14 17"><path d="M0.5 0.5H9L13.5 5V16.5H0.5Z" fill="#fdfdff" stroke="#4a6aa8"/><path d="M9 0.5V5H13.5" fill="#dde6f5" stroke="#4a6aa8"/><path d="M2 15.5H12.5V6" fill="none" stroke="#c8d2e8"/></svg>
<svg class="a" style="left:195px;top:136px" width="16" height="13" viewBox="0 0 16 13"><path d="M0.5 2.5V1.5H5.5L6.5 2.5H13.5V5.5" fill="#f8e0a0" stroke="#b8860b"/><path d="M0.5 12.5V3.5H13.5V5.5" fill="#f3cf6a" stroke="#b8860b"/><path d="M0.5 12.5L3 5.5H15.5L13 12.5Z" fill="#fbd872" stroke="#b8860b"/></svg>
<svg class="a" style="left:225px;top:135px" width="14" height="14" viewBox="0 0 14 14"><defs><linearGradient id="sv" x1="0" y1="0" x2="1" y2="1"><stop offset="0" stop-color="#7a7af0"/><stop offset="1" stop-color="#3030b0"/></linearGradient></defs><rect x="0.5" y="0.5" width="13" height="13" fill="url(#sv)" stroke="#2a2a90"/><rect x="2.5" y="1" width="9" height="6" fill="#f4f4ff"/><rect x="4" y="9" width="7" height="4.5" fill="#2a2a50"/><rect x="5" y="10" width="2" height="2.5" fill="#e0e0f0"/></svg>
<svg class="a" style="left:254px;top:135px" width="13" height="16" viewBox="0 0 13 16"><rect x="0.5" y="0.5" width="12" height="15" fill="#fff" stroke="#9a9a9a"/><path d="M3 3.5H10M3 5.5H10M3 7.5H10M3 9.5H10M3 11.5H10" stroke="#9a9a9a"/></svg>
<svg class="a" style="left:286px;top:135px" width="16" height="16" viewBox="0 0 16 16"><path d="M6 10L1.8 14.2" stroke="#a86a3a" stroke-width="2.6" stroke-linecap="round"/><circle cx="9.5" cy="6.5" r="5" fill="#dde8f2" stroke="#6a6a6a" stroke-width="1.3"/><path d="M7 4.5Q8 3.5 9.5 3.5" fill="none" stroke="#fff" stroke-width="1"/></svg>
<div class="a" style="left:320px;top:136px;width:13px;height:13px;background:#8c8c8c;box-shadow:inset 0 0 0 1px #7a7a7a;"></div>
<svg class="a" style="left:349px;top:135px" width="13" height="15" viewBox="0 0 13 15"><path d="M1 1L12.5 7.5L1 14Z" fill="#5ec83a" stroke="#3a9a20"/></svg>
<div class="t s" style="left:376.5px;top:133px;font-size:15px;line-height:15px;font-family:'Liberation Sans', sans-serif;color:#1a5cb8;">$x</div>
<svg class="a" style="left:403px;top:133px" width="20" height="17" viewBox="0 0 20 17"><path d="M6 3L8 5M10 2.5L10.5 5M6 14L8 12M10 14.5L10.5 12M14 3.5L13 5.5M14 13.5L13 11.5" stroke="#3a2412" stroke-width="1.3"/><ellipse cx="9" cy="8.5" rx="6.2" ry="5" fill="#4a2c16"/><path d="M3.5 8.5H12" stroke="#e8dcc8" stroke-width="1.2"/><path d="M13 4.5Q17.5 5 17.5 8.5Q17.5 12 13 12.5" fill="#f4efe6" stroke="#5a4030" stroke-width="1"/><path d="M17 6L19 5M17 11L19 12" stroke="#5a4030"/></svg>
<div class="t s" style="left:433.5px;top:131px;font-size:18px;line-height:18px;font-family:'Liberation Sans', sans-serif;color:#333;letter-spacing:-0.404px;">Editor</div>
<div class="t s" style="left:434.5px;top:132px;font-size:15.5px;line-height:15.5px;font-family:'Liberation Sans', sans-serif;color:#5a5a5a;letter-spacing:0.867px;">Editor:</div>
<div class="a" style="left:160px;top:160px;width:121px;height:23px;background:#ffffff;box-shadow:inset 0 0 0 1px #d9d9d9;"></div>
<svg class="a" style="left:164px;top:161px" width="20" height="18" viewBox="0 0 20 18"><g fill="none" stroke="#000" stroke-width="1.5" stroke-linecap="round" stroke-linejoin="round"><path d="M11 3.6L15.6 3.2L14.8 7.6M5 9.4L4.2 14L9.5 13.4M5.3 7L14.5 10.6M8.2 4.5L11.5 13.5"/></g></svg>
<div class="t s" style="left:185.6px;top:164px;font-size:12px;line-height:12px;font-family:'Liberation Sans', sans-serif;color:#000;letter-spacing:-0.629px;">ejercicio2.xml</div>
<svg class="a" style="left:262px;top:165px" width="11" height="11" viewBox="0 0 11 11"><path d="M1 1L10 10M10 1L1 10" stroke="#777" stroke-width="2.6"/><path d="M1 1L10 10M10 1L1 10" stroke="#fff" stroke-width="1"/></svg>
<div class="a" style="left:160px;top:182px;width:321px;height:198px;background:#ffffff;"></div>
<div class="a" style="left:161px;top:188px;width:303px;height:36px;background:#e2e8f2;"></div>
<div class="a" style="left:185px;top:186px;width:1px;height:193px;background:#d6d6d6;"></div>
<div class="t" style="left:174px;top:192px;font-size:13.3px;line-height:13.3px;font-family:'Liberation Mono', monospace;color:#999;">1</div>
<div class="t" style="left:174px;top:228px;font-size:13.3px;line-height:13.3px;font-family:'Liberation Mono', monospace;color:#999;">2</div>
<div class="t" style="left:174px;top:246px;font-size:13.3px;line-height:13.3px;font-family:'Liberation Mono', monospace;color:#999;">3</div>
<div class="t" style="left:174px;top:264px;font-size:13.3px;line-height:13.3px;font-family:'Liberation Mono', monospace;color:#999;">4</div>
<div class="t" style="left:174px;top:282px;font-size:13.3px;line-height:13.3px;font-family:'Liberation Mono', monospace;color:#999;">5</div>
<div class="t" style="left:174px;top:318px;font-size:13.3px;line-height:13.3px;font-family:'Liberation Mono', monospace;color:#999;">6</div>
<div class="t" style="left:174px;top:336px;font-size:13.3px;line-height:13.3px;font-family:'Liberation Mono', monospace;color:#999;">7</div>
<div class="t" style="left:174px;top:372px;font-size:13.3px;line-height:13.3px;font-family:'Liberation Mono', monospace;color:#999;">8</div>
<div class="a" style="left:186px;top:186px;width:278px;height:193px;overflow:hidden">
<div class="t" style="left:6.60px;top:5.81px;font-size:13.3px;line-height:13.3px;font-family:'Liberation Mono',monospace;color:#2356c0">&lt;</div>
<div class="t" style="left:14.58px;top:5.81px;font-size:13.3px;line-height:13.3px;font-family:'Liberation Mono',monospace;color:#2a982a">?xml version="1.0" encoding="</div>
<div class="t" style="left:6.60px;top:23.81px;font-size:13.3px;line-height:13.3px;font-family:'Liberation Mono',monospace;color:#2a982a">UTF-8"?</div>
<div class="t" style="left:62.46px;top:23.81px;font-size:13.3px;line-height:13.3px;font-family:'Liberation Mono',monospace;color:#2356c0">&gt;</div>
<div class="t" style="left:6.60px;top:41.81px;font-size:13.3px;line-height:13.3px;font-family:'Liberation Mono',monospace;color:#2356c0">&lt;ies&gt;</div>
<div class="t" style="left:6.60px;top:59.81px;font-size:13.3px;line-height:13.3px;font-family:'Liberation Mono',monospace;color:#2356c0">  &lt;modulos&gt;</div>
<div class="t" style="left:6.60px;top:77.81px;font-size:13.3px;line-height:13.3px;font-family:'Liberation Mono',monospace;color:#2356c0">    &lt;modulo </div>
<div class="t" style="left:102.36px;top:77.81px;font-size:13.3px;line-height:13.3px;font-family:'Liberation Mono',monospace;color:#2a982a">id</div>
<div class="t" style="left:118.32px;top:77.81px;font-size:13.3px;line-height:13.3px;font-family:'Liberation Mono',monospace;color:#2356c0">=</div>
<div class="t" style="left:126.30px;top:77.81px;font-size:13.3px;line-height:13.3px;font-family:'Liberation Mono',monospace;color:#808080">"0228"</div>
<div class="t" style="left:174.18px;top:77.81px;font-size:13.3px;line-height:13.3px;font-family:'Liberation Mono',monospace;color:#2356c0">&gt;</div>
<div class="t" style="left:6.60px;top:95.81px;font-size:13.3px;line-height:13.3px;font-family:'Liberation Mono',monospace;color:#2356c0">      &lt;nombre&gt;</div>
<div class="t" style="left:118.32px;top:95.81px;font-size:13.3px;line-height:13.3px;font-family:'Liberation Mono',monospace;color:#000">Aplicaciones web</div>
<div class="t" style="left:246.00px;top:95.81px;font-size:13.3px;line-height:13.3px;font-family:'Liberation Mono',monospace;color:#2356c0">&lt;/</div>
<div class="t" style="left:6.60px;top:113.81px;font-size:13.3px;line-height:13.3px;font-family:'Liberation Mono',monospace;color:#2356c0">nombre&gt;</div>
<div class="t" style="left:6.60px;top:131.81px;font-size:13.3px;line-height:13.3px;font-family:'Liberation Mono',monospace;color:#2356c0">      &lt;curso&gt;</div>
<div class="t" style="left:110.34px;top:131.81px;font-size:13.3px;line-height:13.3px;font-family:'Liberation Mono',monospace;color:#000">2</div>
<div class="t" style="left:118.32px;top:131.81px;font-size:13.3px;line-height:13.3px;font-family:'Liberation Mono',monospace;color:#2356c0">&lt;/curso&gt;</div>
<div class="t" style="left:6.60px;top:149.81px;font-size:13.3px;line-height:13.3px;font-family:'Liberation Mono',monospace;color:#2356c0">      &lt;horasSemanales&gt;</div>
<div class="t" style="left:182.16px;top:149.81px;font-size:13.3px;line-height:13.3px;font-family:'Liberation Mono',monospace;color:#000">4</div>
<div class="t" style="left:190.14px;top:149.81px;font-size:13.3px;line-height:13.3px;font-family:'Liberation Mono',monospace;color:#2356c0">&lt;/</div>
<div class="t" style="left:6.60px;top:167.81px;font-size:13.3px;line-height:13.3px;font-family:'Liberation Mono',monospace;color:#2356c0">horasSemanales&gt;</div>
<div class="t" style="left:6.60px;top:185.81px;font-size:13.3px;line-height:13.3px;font-family:'Liberation Mono',monospace;color:#2356c0">      &lt;ciclo&gt;</div>
<div class="t" style="left:110.34px;top:185.81px;font-size:13.3px;line-height:13.3px;font-family:'Liberation Mono',monospace;color:#000">SMR</div>
<div class="t" style="left:134.28px;top:185.81px;font-size:13.3px;line-height:13.3px;font-family:'Liberation Mono',monospace;color:#2356c0">&lt;/ciclo&gt;</div>
</div>
<div class="a" style="left:464px;top:186px;width:17px;height:193px;background:#f0f0f0;box-shadow:inset 0 0 0 1px #a0a0a0;"></div>
<div class="a" style="left:464px;top:186px;width:17px;height:17px;background:#ffffff;box-shadow:inset 0 0 0 1px #a0a0a0;"></div>
<svg class="a" style="left:469px;top:192px" width="8" height="6" viewBox="0 0 8 6"><path d="M4 0L8 6H0Z" fill="#333"/></svg>
<div class="a" style="left:464px;top:202px;width:17px;height:42px;background:#ffffff;box-shadow:inset 0 0 0 1px #a0a0a0;"></div>
<div class="a" style="left:469px;top:221px;width:7px;height:1px;background:#444;"></div>
<div class="a" style="left:469px;top:223px;width:7px;height:1px;background:#444;"></div>
<div class="a" style="left:469px;top:225px;width:7px;height:1px;background:#444;"></div>
<div class="a" style="left:464px;top:362px;width:17px;height:17px;background:#ffffff;box-shadow:inset 0 0 0 1px #a0a0a0;"></div>
<svg class="a" style="left:469px;top:367px" width="8" height="6" viewBox="0 0 8 6"><path d="M0 0H8L4 6Z" fill="#333"/></svg>
<svg class="a" style="left:160px;top:391px" width="14" height="14" viewBox="0 0 14 14"><defs><radialGradient id="gk" cx="0.4" cy="0.3" r="0.7"><stop offset="0" stop-color="#8ee86a"/><stop offset="1" stop-color="#1f9a1f"/></radialGradient></defs><circle cx="7" cy="7" r="6.6" fill="url(#gk)" stroke="#2a8a2a" stroke-width="0.8"/><path d="M3.8 7.2L6 9.6L10.2 4.2" fill="none" stroke="#fff" stroke-width="1.8"/></svg>
<div class="t s" style="left:179.5px;top:394px;font-size:12px;line-height:12px;font-family:'Liberation Sans', sans-serif;color:#000;">OK</div>
<div class="t" style="left:457px;top:394px;font-size:13px;line-height:13px;font-family:'Liberation Mono', monospace;color:#000;">1</div>
<div class="t" style="left:467px;top:394px;font-size:13px;line-height:13px;font-family:'Liberation Mono', monospace;color:#000;">:</div>
<div class="t" style="left:477px;top:394px;font-size:13px;line-height:13px;font-family:'Liberation Mono', monospace;color:#000;">1</div>
<div class="a" style="left:498px;top:124px;width:486px;height:288px;background:#1e88d6;"></div>
<div class="a" style="left:500px;top:126px;width:484px;height:284px;background:#f1f3f8;"></div>
<div class="a" style="left:500px;top:409px;width:484px;height:1px;background:#fafbfd;"></div>
<div class="t" style="left:501px;top:127px;font-size:14.5px;line-height:14.5px;font-family:'Liberation Sans', sans-serif;color:#000;letter-spacing:0.090px;">ejercicio2.xml</div>
<div class="a" style="left:501px;top:142px;width:482px;height:267px;background:#e2e8f1;"></div>
<div class="a" style="left:501px;top:142px;width:482px;height:1px;background:#c9d6e9;"></div>
<div class="a" style="left:501px;top:142px;width:1px;height:267px;background:#c9d6e9;"></div>
<div class="a" style="left:501px;top:408px;width:482px;height:1px;background:#eef2f8;"></div>
<div class="a" style="left:982px;top:142px;width:1px;height:267px;background:#eef2f8;"></div>
<div class="t" style="left:504px;top:144px;font-size:15px;line-height:15px;font-family:'Liberation Sans', sans-serif;color:#000;letter-spacing:-0.120px;">ies</div>
<div class="a" style="left:502px;top:160px;width:480px;height:248px;background:#d3ddec;"></div>
<div class="a" style="left:502px;top:160px;width:480px;height:1px;background:#bccde6;"></div>
<div class="a" style="left:502px;top:160px;width:1px;height:248px;background:#bccde6;"></div>
<div class="a" style="left:502px;top:407px;width:480px;height:1px;background:#e2e9f3;"></div>
<div class="a" style="left:981px;top:160px;width:1px;height:248px;background:#e2e9f3;"></div>
<div class="t" style="left:505px;top:162px;font-size:15px;line-height:15px;font-family:'Liberation Sans', sans-serif;color:#000;letter-spacing:-0.120px;">modulos</div>
<div class="a" style="left:504px;top:178px;width:226px;height:114px;background:#c4d3e8;"></div>
<div class="a" style="left:504px;top:178px;width:226px;height:1px;background:#a3badc;"></div>
<div class="a" style="left:504px;top:178px;width:1px;height:114px;background:#a3badc;"></div>
<div class="a" style="left:504px;top:291px;width:226px;height:1px;background:#d4dfee;"></div>
<div class="a" style="left:729px;top:178px;width:1px;height:114px;background:#d4dfee;"></div>
<div class="t" style="left:507px;top:180px;font-size:15px;line-height:15px;font-family:'Liberation Sans', sans-serif;color:#000;letter-spacing:-0.120px;">modulo</div>
<div class="a" style="left:504px;top:292px;width:226px;height:114px;background:#c4d3e8;"></div>
<div class="a" style="left:504px;top:292px;width:226px;height:1px;background:#a3badc;"></div>
<div class="a" style="left:504px;top:292px;width:1px;height:114px;background:#a3badc;"></div>
<div class="a" style="left:504px;top:405px;width:226px;height:1px;background:#d4dfee;"></div>
<div class="a" style="left:729px;top:292px;width:1px;height:114px;background:#d4dfee;"></div>
<div class="t" style="left:507px;top:294px;font-size:15px;line-height:15px;font-family:'Liberation Sans', sans-serif;color:#000;letter-spacing:-0.120px;">modulo</div>
<div class="a" style="left:730px;top:178px;width:136px;height:228px;background:#c4d3e8;"></div>
<div class="a" style="left:730px;top:178px;width:136px;height:1px;background:#a3badc;"></div>
<div class="a" style="left:730px;top:178px;width:1px;height:228px;background:#a3badc;"></div>
<div class="a" style="left:730px;top:405px;width:136px;height:1px;background:#d4dfee;"></div>
<div class="a" style="left:865px;top:178px;width:1px;height:228px;background:#d4dfee;"></div>
<div class="t" style="left:733px;top:180px;font-size:15px;line-height:15px;font-family:'Liberation Sans', sans-serif;color:#000;letter-spacing:-0.120px;">modulo</div>
<div class="a" style="left:866px;top:178px;width:114px;height:228px;background:#c4d3e8;"></div>
<div class="a" style="left:866px;top:178px;width:114px;height:1px;background:#a3badc;"></div>
<div class="a" style="left:866px;top:178px;width:1px;height:228px;background:#a3badc;"></div>
<div class="a" style="left:866px;top:405px;width:114px;height:1px;background:#d4dfee;"></div>
<div class="a" style="left:979px;top:178px;width:1px;height:228px;background:#d4dfee;"></div>
<div class="t" style="left:869px;top:180px;font-size:15px;line-height:15px;font-family:'Liberation Sans', sans-serif;color:#000;letter-spacing:-0.120px;">modulo</div>
<div class="a" style="left:506px;top:196px;width:55px;height:94px;background:#b8c9e3;"></div>
<div class="a" style="left:506px;top:196px;width:55px;height:1px;background:#98b0d6;"></div>
<div class="a" style="left:506px;top:196px;width:1px;height:94px;background:#98b0d6;"></div>
<div class="a" style="left:506px;top:289px;width:55px;height:1px;background:#cad7eb;"></div>
<div class="a" style="left:560px;top:196px;width:1px;height:94px;background:#cad7eb;"></div>
<div class="t" style="left:509px;top:198px;font-size:15px;line-height:15px;font-family:'Liberation Sans', sans-serif;color:#000;letter-spacing:-0.120px;">nomb..</div>
<div class="a" style="left:508px;top:214px;width:52px;height:75px;background:#a9bddb;"></div>
<div class="a" style="left:508px;top:214px;width:52px;height:1px;background:#97afd6;"></div>
<div class="a" style="left:508px;top:214px;width:1px;height:75px;background:#97afd6;"></div>
<div class="a" style="left:508px;top:288px;width:52px;height:1px;background:#bfcee6;"></div>
<div class="a" style="left:559px;top:214px;width:1px;height:75px;background:#bfcee6;"></div>
<div class="t" style="left:511.5px;top:221px;font-size:15px;line-height:15px;font-family:'Liberation Mono', monospace;color:#1e3c98;transform:scaleX(0.88);transform-origin:0 0;">Apl..</div>
<div class="t" style="left:518.5px;top:239px;font-size:15px;line-height:15px;font-family:'Liberation Mono', monospace;color:#1e3c98;transform:scaleX(0.88);transform-origin:0 0;">web</div>
<div class="a" style="left:561px;top:196px;width:55px;height:94px;background:#b8c9e3;"></div>
<div class="a" style="left:561px;top:196px;width:55px;height:1px;background:#98b0d6;"></div>
<div class="a" style="left:561px;top:196px;width:1px;height:94px;background:#98b0d6;"></div>
<div class="a" style="left:561px;top:289px;width:55px;height:1px;background:#cad7eb;"></div>
<div class="a" style="left:615px;top:196px;width:1px;height:94px;background:#cad7eb;"></div>
<div class="t" style="left:564px;top:198px;font-size:15px;line-height:15px;font-family:'Liberation Sans', sans-serif;color:#000;letter-spacing:-0.120px;">curso</div>
<div class="a" style="left:563px;top:214px;width:52px;height:75px;background:#a9bddb;"></div>
<div class="a" style="left:563px;top:214px;width:52px;height:1px;background:#97afd6;"></div>
<div class="a" style="left:563px;top:214px;width:1px;height:75px;background:#97afd6;"></div>
<div class="a" style="left:563px;top:288px;width:52px;height:1px;background:#bfcee6;"></div>
<div class="a" style="left:614px;top:214px;width:1px;height:75px;background:#bfcee6;"></div>
<div class="t" style="left:566px;top:221px;font-size:15px;line-height:15px;font-family:'Liberation Mono', monospace;color:#1e3c98;transform:scaleX(0.88);transform-origin:0 0;">2</div>
<div class="a" style="left:616px;top:196px;width:55px;height:94px;background:#b8c9e3;"></div>
<div class="a" style="left:616px;top:196px;width:55px;height:1px;background:#98b0d6;"></div>
<div class="a" style="left:616px;top:196px;width:1px;height:94px;background:#98b0d6;"></div>
<div class="a" style="left:616px;top:289px;width:55px;height:1px;background:#cad7eb;"></div>
<div class="a" style="left:670px;top:196px;width:1px;height:94px;background:#cad7eb;"></div>
<div class="t" style="left:619px;top:198px;font-size:15px;line-height:15px;font-family:'Liberation Sans', sans-serif;color:#000;letter-spacing:-0.120px;">horas..</div>
<div class="a" style="left:618px;top:214px;width:52px;height:75px;background:#a9bddb;"></div>
<div class="a" style="left:618px;top:214px;width:52px;height:1px;background:#97afd6;"></div>
<div class="a" style="left:618px;top:214px;width:1px;height:75px;background:#97afd6;"></div>
<div class="a" style="left:618px;top:288px;width:52px;height:1px;background:#bfcee6;"></div>
<div class="a" style="left:669px;top:214px;width:1px;height:75px;background:#bfcee6;"></div>
<div class="t" style="left:621px;top:221px;font-size:15px;line-height:15px;font-family:'Liberation Mono', monospace;color:#1e3c98;transform:scaleX(0.88);transform-origin:0 0;">4</div>
<div class="a" style="left:671px;top:196px;width:57px;height:94px;background:#b8c9e3;"></div>
<div class="a" style="left:671px;top:196px;width:57px;height:1px;background:#98b0d6;"></div>
<div class="a" style="left:671px;top:196px;width:1px;height:94px;background:#98b0d6;"></div>
<div class="a" style="left:671px;top:289px;width:57px;height:1px;background:#cad7eb;"></div>
<div class="a" style="left:727px;top:196px;width:1px;height:94px;background:#cad7eb;"></div>
<div class="t" style="left:674px;top:198px;font-size:15px;line-height:15px;font-family:'Liberation Sans', sans-serif;color:#000;letter-spacing:-0.120px;">ciclo</div>
<div class="a" style="left:673px;top:214px;width:54px;height:75px;background:#a9bddb;"></div>
<div class="a" style="left:673px;top:214px;width:54px;height:1px;background:#97afd6;"></div>
<div class="a" style="left:673px;top:214px;width:1px;height:75px;background:#97afd6;"></div>
<div class="a" style="left:673px;top:288px;width:54px;height:1px;background:#bfcee6;"></div>
<div class="a" style="left:726px;top:214px;width:1px;height:75px;background:#bfcee6;"></div>
<div class="t" style="left:676px;top:221px;font-size:15px;line-height:15px;font-family:'Liberation Mono', monospace;color:#1e3c98;transform:scaleX(0.88);transform-origin:0 0;">SMR</div>
<div class="a" style="left:506px;top:310px;width:55px;height:94px;background:#b8c9e3;"></div>
<div class="a" style="left:506px;top:310px;width:55px;height:1px;background:#98b0d6;"></div>
<div class="a" style="left:506px;top:310px;width:1px;height:94px;background:#98b0d6;"></div>
<div class="a" style="left:506px;top:403px;width:55px;height:1px;background:#cad7eb;"></div>
<div class="a" style="left:560px;top:310px;width:1px;height:94px;background:#cad7eb;"></div>
<div class="t" style="left:509px;top:312px;font-size:15px;line-height:15px;font-family:'Liberation Sans', sans-serif;color:#000;letter-spacing:-0.120px;">nomb..</div>
<div class="a" style="left:508px;top:328px;width:52px;height:75px;background:#e8786a;"></div>
<div class="a" style="left:508px;top:328px;width:52px;height:1px;background:#d65a4a;"></div>
<div class="a" style="left:508px;top:328px;width:1px;height:75px;background:#d65a4a;"></div>
<div class="a" style="left:508px;top:402px;width:52px;height:1px;background:#f0a090;"></div>
<div class="a" style="left:559px;top:328px;width:1px;height:75px;background:#f0a090;"></div>
<div class="a" style="left:511px;top:331px;width:28px;height:7px;background:#6a93c6;"></div>
<div class="a" style="left:542px;top:331px;width:7px;height:7px;background:#6a93c6;"></div>
<div class="a" style="left:511px;top:342px;width:18px;height:7px;background:#6a93c6;"></div>
<div class="a" style="left:532px;top:342px;width:7px;height:7px;background:#6a93c6;"></div>
<div class="a" style="left:511px;top:353px;width:17px;height:7px;background:#6a93c6;"></div>
<div class="a" style="left:561px;top:310px;width:55px;height:94px;background:#b8c9e3;"></div>
<div class="a" style="left:561px;top:310px;width:55px;height:1px;background:#98b0d6;"></div>
<div class="a" style="left:561px;top:310px;width:1px;height:94px;background:#98b0d6;"></div>
<div class="a" style="left:561px;top:403px;width:55px;height:1px;background:#cad7eb;"></div>
<div class="a" style="left:615px;top:310px;width:1px;height:94px;background:#cad7eb;"></div>
<div class="t" style="left:564px;top:312px;font-size:15px;line-height:15px;font-family:'Liberation Sans', sans-serif;color:#000;letter-spacing:-0.120px;">curso</div>
<div class="a" style="left:563px;top:328px;width:52px;height:75px;background:#a9bddb;"></div>
<div class="a" style="left:563px;top:328px;width:52px;height:1px;background:#97afd6;"></div>
<div class="a" style="left:563px;top:328px;width:1px;height:75px;background:#97afd6;"></div>
<div class="a" style="left:563px;top:402px;width:52px;height:1px;background:#bfcee6;"></div>
<div class="a" style="left:614px;top:328px;width:1px;height:75px;background:#bfcee6;"></div>
<div class="t" style="left:566px;top:335px;font-size:15px;line-height:15px;font-family:'Liberation Mono', monospace;color:#1e3c98;transform:scaleX(0.88);transform-origin:0 0;">1</div>
<div class="a" style="left:616px;top:310px;width:55px;height:94px;background:#b8c9e3;"></div>
<div class="a" style="left:616px;top:310px;width:55px;height:1px;background:#98b0d6;"></div>
<div class="a" style="left:616px;top:310px;width:1px;height:94px;background:#98b0d6;"></div>
<div class="a" style="left:616px;top:403px;width:55px;height:1px;background:#cad7eb;"></div>
<div class="a" style="left:670px;top:310px;width:1px;height:94px;background:#cad7eb;"></div>
<div class="t" style="left:619px;top:312px;font-size:15px;line-height:15px;font-family:'Liberation Sans', sans-serif;color:#000;letter-spacing:-0.120px;">horas..</div>
<div class="a" style="left:618px;top:328px;width:52px;height:75px;background:#a9bddb;"></div>
<div class="a" style="left:618px;top:328px;width:52px;height:1px;background:#97afd6;"></div>
<div class="a" style="left:618px;top:328px;width:1px;height:75px;background:#97afd6;"></div>
<div class="a" style="left:618px;top:402px;width:52px;height:1px;background:#bfcee6;"></div>
<div class="a" style="left:669px;top:328px;width:1px;height:75px;background:#bfcee6;"></div>
<div class="t" style="left:621px;top:335px;font-size:15px;line-height:15px;font-family:'Liberation Mono', monospace;color:#1e3c98;transform:scaleX(0.88);transform-origin:0 0;">5</div>
<div class="a" style="left:671px;top:310px;width:57px;height:94px;background:#b8c9e3;"></div>
<div class="a" style="left:671px;top:310px;width:57px;height:1px;background:#98b0d6;"></div>
<div class="a" style="left:671px;top:310px;width:1px;height:94px;background:#98b0d6;"></div>
<div class="a" style="left:671px;top:403px;width:57px;height:1px;background:#cad7eb;"></div>
<div class="a" style="left:727px;top:310px;width:1px;height:94px;background:#cad7eb;"></div>
<div class="t" style="left:674px;top:312px;font-size:15px;line-height:15px;font-family:'Liberation Sans', sans-serif;color:#000;letter-spacing:-0.120px;">ciclo</div>
<div class="a" style="left:673px;top:328px;width:54px;height:75px;background:#a9bddb;"></div>
<div class="a" style="left:673px;top:328px;width:54px;height:1px;background:#97afd6;"></div>
<div class="a" style="left:673px;top:328px;width:1px;height:75px;background:#97afd6;"></div>
<div class="a" style="left:673px;top:402px;width:54px;height:1px;background:#bfcee6;"></div>
<div class="a" style="left:726px;top:328px;width:1px;height:75px;background:#bfcee6;"></div>
<div class="t" style="left:676px;top:335px;font-size:15px;line-height:15px;font-family:'Liberation Mono', monospace;color:#1e3c98;transform:scaleX(0.88);transform-origin:0 0;">ASIR</div>
<div class="a" style="left:731px;top:196px;width:88px;height:62px;background:#b8c9e3;"></div>
<div class="a" style="left:731px;top:196px;width:88px;height:1px;background:#98b0d6;"></div>
<div class="a" style="left:731px;top:196px;width:1px;height:62px;background:#98b0d6;"></div>
<div class="a" style="left:731px;top:257px;width:88px;height:1px;background:#cad7eb;"></div>
<div class="a" style="left:818px;top:196px;width:1px;height:62px;background:#cad7eb;"></div>
<div class="t" style="left:734px;top:198px;font-size:15px;line-height:15px;font-family:'Liberation Sans', sans-serif;color:#000;letter-spacing:-0.120px;">nombre</div>
<div class="a" style="left:733px;top:214px;width:85px;height:43px;background:#e8786a;"></div>
<div class="a" style="left:733px;top:214px;width:85px;height:1px;background:#d65a4a;"></div>
<div class="a" style="left:733px;top:214px;width:1px;height:43px;background:#d65a4a;"></div>
<div class="a" style="left:733px;top:256px;width:85px;height:1px;background:#f0a090;"></div>
<div class="a" style="left:817px;top:214px;width:1px;height:43px;background:#f0a090;"></div>
<div class="a" style="left:736px;top:217px;width:31px;height:7px;background:#6a93c6;"></div>
<div class="a" style="left:770px;top:217px;width:7px;height:7px;background:#6a93c6;"></div>
<div class="a" style="left:781px;top:217px;width:22px;height:7px;background:#6a93c6;"></div>
<div class="a" style="left:806px;top:217px;width:3px;height:7px;background:#6a93c6;"></div>
<div class="a" style="left:736px;top:228px;width:29px;height:7px;background:#6a93c6;"></div>
<div class="a" style="left:768px;top:228px;width:7px;height:7px;background:#6a93c6;"></div>
<div class="a" style="left:779px;top:228px;width:28px;height:7px;background:#6a93c6;"></div>
<div class="a" style="left:736px;top:239px;width:7px;height:7px;background:#6a93c6;"></div>
<div class="a" style="left:746px;top:239px;width:43px;height:7px;background:#6a93c6;"></div>
<div class="a" style="left:731px;top:258px;width:88px;height:62px;background:#b8c9e3;"></div>
<div class="a" style="left:731px;top:258px;width:88px;height:1px;background:#98b0d6;"></div>
<div class="a" style="left:731px;top:258px;width:1px;height:62px;background:#98b0d6;"></div>
<div class="a" style="left:731px;top:319px;width:88px;height:1px;background:#cad7eb;"></div>
<div class="a" style="left:818px;top:258px;width:1px;height:62px;background:#cad7eb;"></div>
<div class="t" style="left:734px;top:260px;font-size:15px;line-height:15px;font-family:'Liberation Sans', sans-serif;color:#000;letter-spacing:-0.120px;">curso</div>
<div class="a" style="left:733px;top:276px;width:85px;height:43px;background:#a9bddb;"></div>
<div class="a" style="left:733px;top:276px;width:85px;height:1px;background:#97afd6;"></div>
<div class="a" style="left:733px;top:276px;width:1px;height:43px;background:#97afd6;"></div>
<div class="a" style="left:733px;top:318px;width:85px;height:1px;background:#bfcee6;"></div>
<div class="a" style="left:817px;top:276px;width:1px;height:43px;background:#bfcee6;"></div>
<div class="t" style="left:736px;top:283px;font-size:15px;line-height:15px;font-family:'Liberation Mono', monospace;color:#1e3c98;transform:scaleX(0.88);transform-origin:0 0;">1</div>
<div class="a" style="left:819px;top:196px;width:45px;height:124px;background:#b8c9e3;"></div>
<div class="a" style="left:819px;top:196px;width:45px;height:1px;background:#98b0d6;"></div>
<div class="a" style="left:819px;top:196px;width:1px;height:124px;background:#98b0d6;"></div>
<div class="a" style="left:819px;top:319px;width:45px;height:1px;background:#cad7eb;"></div>
<div class="a" style="left:863px;top:196px;width:1px;height:124px;background:#cad7eb;"></div>
<div class="t" style="left:822px;top:198px;font-size:15px;line-height:15px;font-family:'Liberation Sans', sans-serif;color:#000;letter-spacing:-0.120px;">hor..</div>
<div class="a" style="left:821px;top:214px;width:42px;height:105px;background:#a9bddb;"></div>
<div class="a" style="left:821px;top:214px;width:42px;height:1px;background:#97afd6;"></div>
<div class="a" style="left:821px;top:214px;width:1px;height:105px;background:#97afd6;"></div>
<div class="a" style="left:821px;top:318px;width:42px;height:1px;background:#bfcee6;"></div>
<div class="a" style="left:862px;top:214px;width:1px;height:105px;background:#bfcee6;"></div>
<div class="t" style="left:824px;top:221px;font-size:15px;line-height:15px;font-family:'Liberation Mono', monospace;color:#1e3c98;transform:scaleX(0.88);transform-origin:0 0;">3</div>
<div class="a" style="left:731px;top:320px;width:66px;height:84px;background:#b8c9e3;"></div>
<div class="a" style="left:731px;top:320px;width:66px;height:1px;background:#98b0d6;"></div>
<div class="a" style="left:731px;top:320px;width:1px;height:84px;background:#98b0d6;"></div>
<div class="a" style="left:731px;top:403px;width:66px;height:1px;background:#cad7eb;"></div>
<div class="a" style="left:796px;top:320px;width:1px;height:84px;background:#cad7eb;"></div>
<div class="t" style="left:734px;top:322px;font-size:15px;line-height:15px;font-family:'Liberation Sans', sans-serif;color:#000;letter-spacing:-0.120px;">ciclo</div>
<div class="a" style="left:733px;top:338px;width:63px;height:65px;background:#a9bddb;"></div>
<div class="a" style="left:733px;top:338px;width:63px;height:1px;background:#97afd6;"></div>
<div class="a" style="left:733px;top:338px;width:1px;height:65px;background:#97afd6;"></div>
<div class="a" style="left:733px;top:402px;width:63px;height:1px;background:#bfcee6;"></div>
<div class="a" style="left:795px;top:338px;width:1px;height:65px;background:#bfcee6;"></div>
<div class="t" style="left:736px;top:345px;font-size:15px;line-height:15px;font-family:'Liberation Mono', monospace;color:#1e3c98;transform:scaleX(0.88);transform-origin:0 0;">ASIR</div>
<div class="a" style="left:797px;top:320px;width:67px;height:84px;background:#b8c9e3;"></div>
<div class="a" style="left:797px;top:320px;width:67px;height:1px;background:#98b0d6;"></div>
<div class="a" style="left:797px;top:320px;width:1px;height:84px;background:#98b0d6;"></div>
<div class="a" style="left:797px;top:403px;width:67px;height:1px;background:#cad7eb;"></div>
<div class="a" style="left:863px;top:320px;width:1px;height:84px;background:#cad7eb;"></div>
<div class="t" style="left:800px;top:322px;font-size:15px;line-height:15px;font-family:'Liberation Sans', sans-serif;color:#000;letter-spacing:-0.120px;">ciclo</div>
<div class="a" style="left:799px;top:338px;width:64px;height:65px;background:#a9bddb;"></div>
<div class="a" style="left:799px;top:338px;width:64px;height:1px;background:#97afd6;"></div>
<div class="a" style="left:799px;top:338px;width:1px;height:65px;background:#97afd6;"></div>
<div class="a" style="left:799px;top:402px;width:64px;height:1px;background:#bfcee6;"></div>
<div class="a" style="left:862px;top:338px;width:1px;height:65px;background:#bfcee6;"></div>
<div class="t" style="left:802px;top:345px;font-size:15px;line-height:15px;font-family:'Liberation Mono', monospace;color:#1e3c98;transform:scaleX(0.88);transform-origin:0 0;">DAW</div>
<div class="a" style="left:868px;top:196px;width:54px;height:104px;background:#b8c9e3;"></div>
<div class="a" style="left:868px;top:196px;width:54px;height:1px;background:#98b0d6;"></div>
<div class="a" style="left:868px;top:196px;width:1px;height:104px;background:#98b0d6;"></div>
<div class="a" style="left:868px;top:299px;width:54px;height:1px;background:#cad7eb;"></div>
<div class="a" style="left:921px;top:196px;width:1px;height:104px;background:#cad7eb;"></div>
<div class="t" style="left:871px;top:198px;font-size:15px;line-height:15px;font-family:'Liberation Sans', sans-serif;color:#000;letter-spacing:-0.120px;">nomb..</div>
<div class="a" style="left:870px;top:214px;width:51px;height:85px;background:#a9bddb;"></div>
<div class="a" style="left:870px;top:214px;width:51px;height:1px;background:#97afd6;"></div>
<div class="a" style="left:870px;top:214px;width:1px;height:85px;background:#97afd6;"></div>
<div class="a" style="left:870px;top:298px;width:51px;height:1px;background:#bfcee6;"></div>
<div class="a" style="left:920px;top:214px;width:1px;height:85px;background:#bfcee6;"></div>
<div class="a" style="left:872px;top:217px;width:46px;height:7px;background:#6a93c6;"></div>
<div class="a" style="left:872px;top:228px;width:7px;height:7px;background:#6a93c6;"></div>
<div class="a" style="left:872px;top:239px;width:42px;height:7px;background:#6a93c6;"></div>
<div class="a" style="left:872px;top:250px;width:11px;height:7px;background:#6a93c6;"></div>
<div class="a" style="left:922px;top:196px;width:56px;height:104px;background:#b8c9e3;"></div>
<div class="a" style="left:922px;top:196px;width:56px;height:1px;background:#98b0d6;"></div>
<div class="a" style="left:922px;top:196px;width:1px;height:104px;background:#98b0d6;"></div>
<div class="a" style="left:922px;top:299px;width:56px;height:1px;background:#cad7eb;"></div>
<div class="a" style="left:977px;top:196px;width:1px;height:104px;background:#cad7eb;"></div>
<div class="t" style="left:925px;top:198px;font-size:15px;line-height:15px;font-family:'Liberation Sans', sans-serif;color:#000;letter-spacing:-0.120px;">curso</div>
<div class="a" style="left:924px;top:214px;width:53px;height:85px;background:#a9bddb;"></div>
<div class="a" style="left:924px;top:214px;width:53px;height:1px;background:#97afd6;"></div>
<div class="a" style="left:924px;top:214px;width:1px;height:85px;background:#97afd6;"></div>
<div class="a" style="left:924px;top:298px;width:53px;height:1px;background:#bfcee6;"></div>
<div class="a" style="left:976px;top:214px;width:1px;height:85px;background:#bfcee6;"></div>
<div class="t" style="left:927px;top:221px;font-size:15px;line-height:15px;font-family:'Liberation Mono', monospace;color:#1e3c98;transform:scaleX(0.88);transform-origin:0 0;">2</div>
<div class="a" style="left:868px;top:300px;width:54px;height:104px;background:#b8c9e3;"></div>
<div class="a" style="left:868px;top:300px;width:54px;height:1px;background:#98b0d6;"></div>
<div class="a" style="left:868px;top:300px;width:1px;height:104px;background:#98b0d6;"></div>
<div class="a" style="left:868px;top:403px;width:54px;height:1px;background:#cad7eb;"></div>
<div class="a" style="left:921px;top:300px;width:1px;height:104px;background:#cad7eb;"></div>
<div class="t" style="left:871px;top:302px;font-size:15px;line-height:15px;font-family:'Liberation Sans', sans-serif;color:#000;letter-spacing:-0.120px;">horas..</div>
<div class="a" style="left:870px;top:318px;width:51px;height:85px;background:#a9bddb;"></div>
<div class="a" style="left:870px;top:318px;width:51px;height:1px;background:#97afd6;"></div>
<div class="a" style="left:870px;top:318px;width:1px;height:85px;background:#97afd6;"></div>
<div class="a" style="left:870px;top:402px;width:51px;height:1px;background:#bfcee6;"></div>
<div class="a" style="left:920px;top:318px;width:1px;height:85px;background:#bfcee6;"></div>
<div class="t" style="left:873px;top:325px;font-size:15px;line-height:15px;font-family:'Liberation Mono', monospace;color:#1e3c98;transform:scaleX(0.88);transform-origin:0 0;">5</div>
<div class="a" style="left:922px;top:300px;width:56px;height:104px;background:#b8c9e3;"></div>
<div class="a" style="left:922px;top:300px;width:56px;height:1px;background:#98b0d6;"></div>
<div class="a" style="left:922px;top:300px;width:1px;height:104px;background:#98b0d6;"></div>
<div class="a" style="left:922px;top:403px;width:56px;height:1px;background:#cad7eb;"></div>
<div class="a" style="left:977px;top:300px;width:1px;height:104px;background:#cad7eb;"></div>
<div class="t" style="left:925px;top:302px;font-size:15px;line-height:15px;font-family:'Liberation Sans', sans-serif;color:#000;letter-spacing:-0.120px;">ciclo</div>
<div class="a" style="left:924px;top:318px;width:53px;height:85px;background:#a9bddb;"></div>
<div class="a" style="left:924px;top:318px;width:53px;height:1px;background:#97afd6;"></div>
<div class="a" style="left:924px;top:318px;width:1px;height:85px;background:#97afd6;"></div>
<div class="a" style="left:924px;top:402px;width:53px;height:1px;background:#bfcee6;"></div>
<div class="a" style="left:976px;top:318px;width:1px;height:85px;background:#bfcee6;"></div>
<div class="t" style="left:927px;top:325px;font-size:15px;line-height:15px;font-family:'Liberation Mono', monospace;color:#1e3c98;transform:scaleX(0.88);transform-origin:0 0;">ASIR</div>
<div class="a" style="left:9px;top:434px;width:27px;height:25px;background:#e1e1e1;box-shadow:inset 0 0 0 1px #adadad;"></div>
<div class="a" style="left:38px;top:434px;width:27px;height:25px;background:#e1e1e1;box-shadow:inset 0 0 0 1px #adadad;"></div>
<div class="a" style="left:67px;top:434px;width:27px;height:25px;background:#e1e1e1;box-shadow:inset 0 0 0 1px #adadad;"></div>
<svg class="a" style="left:15px;top:439px" width="14" height="14" viewBox="0 0 14 14"><defs><linearGradient id="sv" x1="0" y1="0" x2="1" y2="1"><stop offset="0" stop-color="#7a7af0"/><stop offset="1" stop-color="#3030b0"/></linearGradient></defs><rect x="0.5" y="0.5" width="13" height="13" fill="url(#sv)" stroke="#2a2a90"/><rect x="2.5" y="1" width="9" height="6" fill="#f4f4ff"/><rect x="4" y="9" width="7" height="4.5" fill="#2a2a50"/><rect x="5" y="10" width="2" height="2.5" fill="#e0e0f0"/></svg>
<svg class="a" style="left:42px;top:437px" width="17" height="17" viewBox="0 0 17 17"><path d="M1 9L8.5 1.5L16 9" fill="none" stroke="#2f7f22" stroke-width="1.5"/><path d="M2.5 8V15.5H14.5V8L8.5 2.5Z" fill="#a6de8e" stroke="#2f7f22"/><path d="M4 9L8.5 4.5L13 9V14H4Z" fill="#c8efb8"/><rect x="6" y="9.5" width="3" height="6" fill="#3a8f2a"/><rect x="12" y="2" width="2" height="4" fill="#2f7f22"/></svg>
<svg class="a" style="left:72px;top:438px" width="16" height="16" viewBox="0 0 16 16"><path d="M6 10L1.8 14.2" stroke="#a86a3a" stroke-width="2.6" stroke-linecap="round"/><circle cx="9.5" cy="6.5" r="5" fill="#dde8f2" stroke="#6a6a6a" stroke-width="1.3"/><path d="M7 4.5Q8 3.5 9.5 3.5" fill="none" stroke="#fff" stroke-width="1"/></svg>
<div class="t s" style="left:105.4px;top:437px;font-size:12px;line-height:12px;font-family:'Liberation Sans', sans-serif;color:#000;letter-spacing:0.283px;">2 Results, 86 b</div>
<div class="t s" style="left:432.4px;top:435px;font-size:18.75px;line-height:18.75px;font-family:'Liberation Sans', sans-serif;color:#333;letter-spacing:-0.469px;">Result</div>
<div class="t" style="left:13px;top:472px;font-size:13.3px;line-height:13.3px;font-family:'Liberation Mono', monospace;color:#000;">Gestión de bases de datos</div>
<div class="t" style="left:13px;top:490px;font-size:13.3px;line-height:13.3px;font-family:'Liberation Mono', monospace;color:#000;">Lenguajes de marcas y sistemas de gestión de información</div>
<div class="a" style="left:461px;top:486px;width:1px;height:18px;background:#000;"></div>
<div class="a" style="left:504px;top:434px;width:27px;height:25px;background:#e1e1e1;box-shadow:inset 0 0 0 1px #adadad;"></div>
<svg class="a" style="left:510px;top:438px" width="16" height="16" viewBox="0 0 16 16"><path d="M6 10L1.8 14.2" stroke="#a86a3a" stroke-width="2.6" stroke-linecap="round"/><circle cx="9.5" cy="6.5" r="5" fill="#dde8f2" stroke="#6a6a6a" stroke-width="1.3"/><path d="M7 4.5Q8 3.5 9.5 3.5" fill="none" stroke="#fff" stroke-width="1"/></svg>
<div class="a" style="left:542px;top:433px;width:105px;height:20px;background:#e1e1e1;box-shadow:inset 0 0 0 1px #adadad;"></div>
<div class="t s" style="left:545.6px;top:437px;font-size:12px;line-height:12px;font-family:'Liberation Sans', sans-serif;color:#000;">All</div>
<svg class="a" style="left:633px;top:442px" width="9" height="6" viewBox="0 0 9 6"><path d="M0.7 0.7L4.5 4.5L8.3 0.7" fill="none" stroke="#444" stroke-width="1.1"/></svg>
<div class="t s" style="left:657.7px;top:437px;font-size:12px;line-height:12px;font-family:'Liberation Sans', sans-serif;color:#000;letter-spacing:0.665px;">Total Time: 1.84 ms</div>
<div class="a" style="left:858px;top:448px;width:19px;height:5px;background:#dde6f3;box-shadow:inset 0 0 0 1px #7a9ccc;"></div>
<div class="a" style="left:876px;top:438px;width:19px;height:15px;background:#b8cbe6;box-shadow:inset 0 0 0 1px #7a9ccc;"></div>
<div class="a" style="left:894px;top:436px;width:19px;height:17px;background:#98b3dc;box-shadow:inset 0 0 0 1px #7a9ccc;"></div>
<div class="a" style="left:858px;top:451px;width:73px;height:1px;background:#7a9ccc;"></div>
<div class="t s" style="left:944.5px;top:435px;font-size:18.75px;line-height:18.75px;font-family:'Liberation Sans', sans-serif;color:#333;letter-spacing:0.576px;">Info</div>
<div class="t s" style="left:508.6px;top:471px;font-size:14.6px;line-height:14.6px;font-family:'Liberation Sans', sans-serif;color:#000;font-weight:bold;letter-spacing:-0.247px;">Compiling:</div>
<div class="t s" style="left:508.6px;top:489px;font-size:14.6px;line-height:14.6px;font-family:'Liberation Sans', sans-serif;color:#000;letter-spacing:0.011px;">- rewrite root to document-node() item: root() -&gt; db:open-pre("</div>
<div class="t s" style="left:508.6px;top:507px;font-size:14.6px;line-height:14.6px;font-family:'Liberation Sans', sans-serif;color:#000;">ejercicio2", 0)</div>
<div class="a" style="left:963px;top:467px;width:17px;height:43px;background:#ffffff;box-shadow:inset 0 0 0 1px #a0a0a0;"></div>
<div class="a" style="left:963px;top:467px;width:17px;height:17px;background:#ffffff;box-shadow:inset 0 0 0 1px #a0a0a0;"></div>
<svg class="a" style="left:969px;top:473px" width="8" height="6" viewBox="0 0 8 6"><path d="M4 0L8 6H0Z" fill="#333"/></svg>
<div class="a" style="left:968px;top:506px;width:7px;height:1px;background:#444;"></div>
<div class="a" style="left:968px;top:508px;width:7px;height:1px;background:#444;"></div></body></html>
